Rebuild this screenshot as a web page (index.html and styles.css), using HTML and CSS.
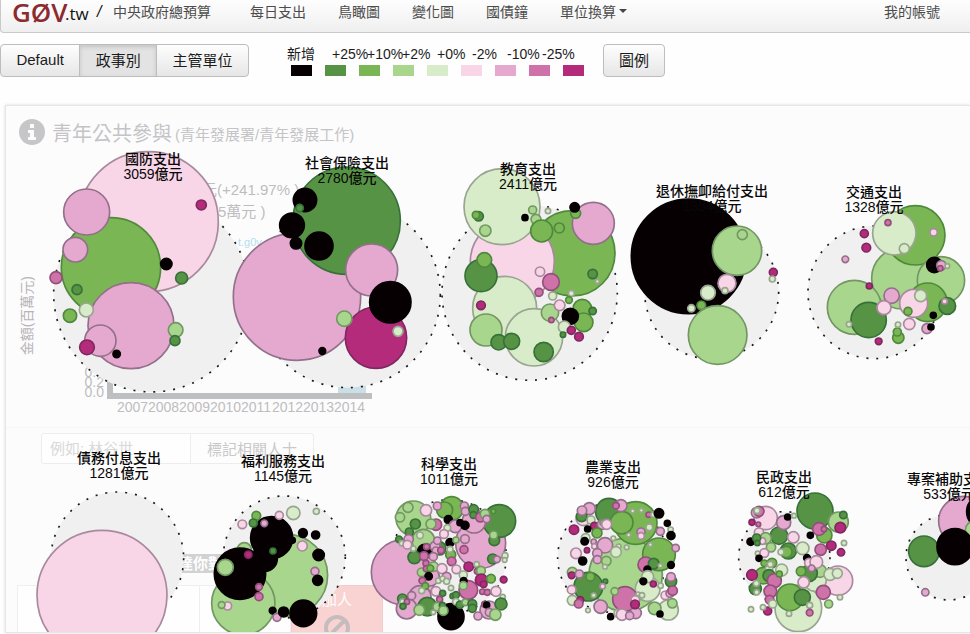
FILE: index.html
```
<!DOCTYPE html>
<html lang="zh-Hant">
<head>
<meta charset="utf-8">
<title>中央政府總預算</title>
<link rel="stylesheet" href="styles.css">
</head>
<body>
<header class="navbar">
  <a class="brand" href="#"><span class="brand-name">GØV</span><span class="brand-tld">.tw</span><span class="brand-slash">/</span></a>
  <nav class="nav">
    <a class="nav-main" href="#">中央政府總預算</a>
    <a href="#">每日支出</a>
    <a href="#">鳥瞰圖</a>
    <a href="#">變化圖</a>
    <a href="#">國債鐘</a>
    <a href="#">單位換算<span class="caret"></span></a>
  </nav>
  <a class="account" href="#">我的帳號</a>
</header>

<div class="toolbar">
  <div class="btn-group">
    <button class="btn" type="button">Default</button>
    <button class="btn active" type="button">政事別</button>
    <button class="btn" type="button">主管單位</button>
  </div>
  <div class="legend">
    <div class="legend-labels">
      <span>新增</span><span>+25%</span><span>+10%</span><span>+2%</span><span>+0%</span><span>-2%</span><span>-10%</span><span>-25%</span>
    </div>
    <div class="legend-swatches">
      <i class="k"></i><i class="d"></i><i class="g"></i><i class="l"></i><i class="p"></i><i class="f"></i><i class="q"></i><i class="m"></i><i class="v"></i>
    </div>
  </div>
  <button class="btn btn-single" type="button">圖例</button>
</div>

<main class="panel">
  <section class="detail">
    <h1 class="detail-title">
      <svg class="info" viewBox="0 0 26 26" aria-hidden="true"><circle cx="13" cy="13" r="13"/><path d="M11 5h4v4h-4zM9 11h6v7h2v3H9v-3h2v-4H9z"/></svg>
      <span>青年公共參與</span><small>(青年發展署/青年發展工作)</small>
    </h1>
    <div class="detail-figures">
      <p>元(+241.97% )</p>
      <p>5萬元 )</p>
      <a href="#">t.g0v</a>
    </div>
    <div class="history">
      <div class="axis-title">金額(百萬元)</div>
      <div class="ticks"><span>0.4</span><span>0.2</span><span>0.0</span></div>
      <div class="plot">
        <div class="bars"><i class="bar-first"></i><i class="bar-last"></i></div>
        <div class="years"><span>2007</span><span>2008</span><span>2009</span><span>2010</span><span>2011</span><span>2012</span><span>2013</span><span>2014</span></div>
      </div>
    </div>
    <form class="tagger">
      <input type="text" aria-label="相關人士" placeholder="例如: 林谷世">
      <button type="button">標記相關人士</button>
    </form>
    <div class="ask"><span>達你對</span></div>
    <div class="votes">
      <div class="vote"></div>
      <div class="vote narrow"></div>
      <div class="vote cut"><span>加人</span>
        <svg viewBox="0 0 28 28" aria-hidden="true"><circle cx="14" cy="14" r="11"/><path d="M7 21L21 7"/></svg>
      </div>
    </div>
  </section>
  <svg class="bubbles" role="img" aria-label="政事別支出"></svg>
</main>
<script src="bubbles.js"></script>
</body>
</html>
```
FILE: styles.css
```
* { box-sizing: border-box; }
body {
  margin: 0;
  height: 100vh;
  display: flex;
  flex-direction: column;
  overflow: hidden;
  background: #fefefe;
  color: #1c1c1c;
  font-family: "Liberation Sans", "Noto Sans CJK TC", sans-serif;
  font-size: 14px;
}
a { color: inherit; text-decoration: none; }
p, h1 { margin: 0; font-weight: normal; }

.navbar {
  display: flex;
  flex: none;
  height: 33px;
  padding: 0 30px 0 11px;
  border: 1px solid #c9c9c9;
  border-top: 0;
  border-right: 0;
  border-radius: 0 0 0 4px;
  background: linear-gradient(#fefefe, #efefef);
  color: #4c4c4c;
  line-height: 24px;
}
.brand { display: flex; width: 101px; color: #111; }
.brand-name { color: #8c2a30; font-size: 26px; line-height: 24px; font-family: "Open Sans", "Liberation Sans", sans-serif; width: 53px; font-weight: 600; }
.brand-tld { font-size: 17px; line-height: 27px; width: 32px; font-family: "Open Sans", sans-serif; font-weight: 500; }
.brand-slash { font-size: 16px; font-style: italic; }
.nav { display: flex; gap: 32px; }
.nav-main { margin-right: 7px; }
.caret {
  display: inline-block;
  margin-left: 3px;
  vertical-align: 4px;
  border: 4px solid transparent;
  border-top-color: #444;
  border-bottom: 0;
}
.account { margin-left: auto; }

.toolbar { display: flex; flex: none; align-items: center; height: 54px; }
.btn-group { display: flex; width: 249px; }
.btn {
  height: 33px;
  padding: 0 15px 2px;
  border: 1px solid #bdbdbd;
  background: linear-gradient(#fefefe, #e6e6e6);
  color: #1c1c1c;
  font: inherit;
  font-size: 15px;
  white-space: nowrap;
}
.btn-group .btn { flex-grow: 1; }
.btn-group .btn + .btn { margin-left: -1px; }
.btn-group .btn:first-child { border-radius: 4px 0 0 4px; }
.btn-group .btn:last-child { border-radius: 0 4px 4px 0; }
.btn.active { background: #e3e3e3; box-shadow: inset 0 2px 4px #c4c4c4; }
.btn-single { border-radius: 4px; }
.legend { width: 316px; margin-left: 38px; }
.legend-labels { display: grid; grid-template-columns: 45px repeat(7, 35px); line-height: 18px; white-space: nowrap; }
.legend-swatches { display: flex; gap: 13px; padding: 2px 0 0 4px; }
.legend-swatches i { width: 21px; height: 11px; }
.k { background: #060003; }
.d { background: #579345; }
.g { background: #7bb654; }
.l { background: #a8d68c; }
.p { background: #d9ecca; }
.f { background: #f8d6e8; }
.q { background: #e5a9d0; }
.m { background: #cf72aa; }
.v { background: #b52b7c; }

.panel {
  position: relative;
  flex: 1;
  min-height: 0;
  margin: 18px 0 1px 5px;
  border: 1px solid #e6e6e6;
  border-right: 0;
  box-shadow: 0 0 3px #dcdcdc;
  background: #fdfcfd;
  overflow: hidden;
}
.bubbles { position: absolute; inset: 0; width: 100%; height: 100%; }
.bubbles text { font-size: 14px; text-anchor: middle; fill: #080808; font-weight: 500; }

.detail { color: #bdbdbf; font-size: 15px; }
.detail-title { display: flex; align-items: center; gap: 7px; height: 30px; margin: 11px 0 0 13px; font-size: 20px; color: #c4c4c6; }
.detail-title small { font-size: 15px; margin: 3px 0 0 -4px; }
.info { width: 26px; height: 26px; fill: #c6c6c8; }
.info path { fill: #fdfcfd; }
.detail-figures { height: 128px; padding: 32px 0 0 196px; line-height: 22px; }
.detail-figures p + p { padding-left: 16px; }
.detail-figures a { display: block; padding-left: 36px; font-size: 11px; line-height: 38px; color: #b5dcf0; }
.history { display: flex; align-items: flex-end; width: 366px; height: 140px; }
.axis-title { writing-mode: vertical-rl; text-orientation: sideways; transform: rotate(180deg); white-space: nowrap; width: 30px; line-height: 30px; margin: 0 0 60px 6px; font-size: 14px; color: #b5b5b7; }
.ticks { display: flex; flex-direction: column; width: 65px; padding: 0 3px 18px 0; text-align: right; line-height: 10px; font-size: 14px; }
.plot { width: 265px; }
.bars { display: flex; justify-content: space-between; align-items: flex-end; height: 24px; padding-right: 6px; border-bottom: 6px solid #bebfc1; }
.bar-first { width: 6px; height: 14px; background: #bebfc1; }
.bar-last { width: 28px; height: 8px; background: #cbdfe9; }
.years { display: grid; grid-template-columns: repeat(8, 31px); padding-left: 10px; font-size: 14px; line-height: 16px; }
.tagger { display: flex; height: 59px; margin-top: 12px; padding: 5px 0 22px 35px; border-top: 1px solid #f6f5f6; }
.tagger input { width: 150px; padding: 0 8px; border: 1px solid #ededed; border-radius: 3px 0 0 3px; background: #fefefe; font: inherit; }
.tagger input::placeholder { color: #d9d9d9; opacity: 1; }
.tagger button { width: 123px; padding: 0; border: 1px solid #ededed; border-left: 0; border-radius: 0 3px 3px 0; background: #fdfdfd; color: #c9c9c9; font: inherit; }
.ask { display: flex; height: 93px; margin-top: 6px; padding: 62px 0 12px 172px; }
.ask span { width: 80px; background: #d2d2d2; color: #fefefe; font-weight: bold; line-height: 19px; }
.votes { display: flex; height: 60px; padding-left: 11px; }
.vote { width: 183px; border: 1px solid #f0eff0; background: #fefefe; }
.vote.narrow { width: 91px; border-left: 0; }
.vote.cut { width: 92px; border-color: #f2cccb; background: #f9d3d2; color: #fefefe; display: flex; flex-direction: column; align-items: center; line-height: 28px; }
.vote svg { width: 28px; flex: none; fill: none; stroke: #c6bcbd; stroke-width: 4; }
```
FILE: bubbles.js
```
// Fill and outline for each level of change.
const COLORS = {
  k: ['#060003', '#060003'], d: ['#579345', '#37713a'], g: ['#7bb654', '#4f8a3c'],
  l: ['#a8d68c', '#739764'], p: ['#d9ecca', '#98a58f'], f: ['#f8d6e8', '#a98a9d'],
  q: ['#e5a9d0', '#93708a'], m: ['#cf72aa', '#91507a'], v: ['#b52b7c', '#7f2860']
};

// Bubbles are "colour x y radius" in thirds of a pixel from the group's origin.
const GROUPS = [
  { at: [0, 100], name: '國防支出', sum: '3059億元', label: [153, 164], total: [455, 582, 294],
    items: 'f 445 365 210,g 333 502 149,q 260 336 69,q 226 449 37,m 168 533 18,d 231 569 15,g 210 647 20,q 393 677 129,p 259 630 21,q 301 722 47,v 261 742 22,k 350 762 11,v 604 315 15,k 499 492 17,d 545 534 18,l 527 690 22,d 525 722 15' },
  { at: [220, 140], name: '社會保險支出', sum: '2780億元', label: [347, 168], total: [383, 465, 278],
    items: 'q 231 470 191,d 380 242 161,k 255 180 35,d 239 204 11,k 216 256 37,k 228 310 17,k 297 318 42,q 455 390 78,v 468 593 92,k 511 487 62,p 534 574 15,l 373 536 23,k 307 633 10' },
  { at: [435, 150], name: '教育支出', sum: '2411億元', label: [528, 174], total: [284, 428, 263],
    items: 'g 412 310 128,f 232 335 126,p 201 170 114,q 475 220 63,p 209 475 96,p 297 562 86,d 131 199 14,g 123 195 11,k 270 203 9,l 293 180 12,l 303 208 15,g 320 243 33,g 373 234 15,p 339 183 8,g 422 190 15,k 419 172 14,l 151 242 17,d 138 377 48,g 148 330 22,f 315 365 14,m 348 396 25,m 312 427 12,d 473 372 14,p 487 394 6,p 353 438 12,p 409 430 9,g 402 450 10,l 345 488 26,f 374 466 16,m 349 510 8,g 442 476 28,g 446 517 28,k 406 499 24,d 473 483 11,p 388 531 18,v 409 541 12,d 384 554 8,v 432 560 13,v 138 466 13,l 153 540 48,d 191 577 23,d 230 574 24,d 326 606 29' },
  { at: [620, 170], name: '退休撫卹給付支出', sum: '1354億元', label: [712, 196], total: [275, 366, 201],
    items: 'k 206 259 172,l 351 242 74,l 367 194 15,f 321 340 27,p 315 362 9,p 264 368 22,g 244 406 13,p 214 415 11,l 293 495 88,v 460 307 12,p 457 327 9' },
  { at: [620, 170], name: '交通支出', sum: '1328億元', label: [874, 197], total: [763, 367, 199],
    items: 'l 847 325 92,g 886 196 89,p 823 190 65,l 963 331 71,l 703 412 81,g 923 397 58,d 746 450 53,f 881 400 42,m 804 158 9,p 853 236 15,f 941 187 11,k 943 285 23,q 964 286 14,m 961 295 8,p 982 288 7,v 733 191 12,v 739 233 13,q 676 268 10,v 748 348 9,q 815 377 23,f 792 413 21,p 902 377 18,g 864 424 12,d 982 408 25,f 974 394 8,k 940 436 9,f 868 462 17,q 921 476 15,k 933 471 9,g 835 503 17,g 832 486 12,p 834 464 8,p 687 463 8,v 776 514 10' },
  { at: [0, 420], name: '債務付息支出', sum: '1281億元', label: [119, 463], total: [352, 415, 199],
    items: 'f 306 526 195' },
  { at: [0, 420], name: '福利服務支出', sum: '1145億元', label: [283, 466], total: [853, 411, 183],
    items: 'l 860 466 123,l 730 550 95,k 815 353 63,k 877 361 9,k 794 416 38,l 733 389 21,k 720 461 77,l 676 442 24,v 745 404 11,g 769 287 13,d 760 309 12,f 727 313 13,q 793 310 10,f 838 286 12,p 880 279 20,p 949 274 9,k 909 339 13,k 947 345 12,f 907 378 15,d 819 393 9,k 956 405 17,q 945 454 12,k 953 481 15,m 777 501 10,m 777 530 12,f 683 558 12,l 665 555 10,k 818 572 10,q 831 592 12,k 851 576 15,k 910 580 40' },
  { at: [360, 450], name: '科學支出', sum: '1011億元', label: [449, 469], total: [268, 320, 171],
    items: 'q 132 367 98,l 160 205 52,q 362 280 75,d 418 213 49,g 275 175 35,g 254 180 24,q 342 214 35,l 190 272 34,q 180 440 33,q 140 476 31,q 387 480 27,k 273 500 39,m 325 420 28,d 202 470 28,q 210 380 28,k 194 304 21,l 144 172 15,l 120 202 14,f 198 181 17,q 232 168 12,q 313 168 12,q 316 184 12,d 341 178 14,d 340 195 10,m 361 202 14,l 375 192 14,q 380 207 11,g 400 184 7,k 265 209 12,q 286 229 19,k 300 218 9,k 315 226 12,m 228 224 17,l 213 222 15,d 166 222 15,d 148 246 12,p 262 234 10,f 252 252 13,d 117 268 10,p 126 280 8,q 146 268 14,f 142 284 13,p 180 256 10,d 238 295 20,q 225 289 15,q 232 272 11,m 200 290 9,q 228 302 11,m 243 301 10,k 270 278 12,l 288 270 9,q 315 267 13,m 312 299 12,d 403 271 16,l 401 255 12,g 272 314 15,p 270 298 9,m 275 334 13,d 163 322 19,p 160 296 8,m 192 318 13,q 220 320 12,m 198 340 9,v 326 350 14,d 398 327 15,q 411 328 10,p 435 317 9,p 434 330 7,p 350 343 8,m 352 364 9,l 363 362 13,l 185 367 13,m 199 356 9,l 221 350 14,g 211 355 10,f 246 356 15,k 206 379 11,f 289 358 13,q 260 380 13,p 235 392 8,p 248 386 8,p 260 394 9,m 187 392 10,g 196 408 10,p 310 375 12,k 311 393 10,l 310 407 12,v 364 390 18,v 371 403 10,g 393 386 13,v 431 389 10,p 273 414 8,p 185 422 9,q 155 437 12,f 228 424 14,d 248 430 9,m 367 425 8,m 382 427 9,f 408 424 15,p 428 441 8,d 278 438 8,d 288 435 10,p 288 455 10,d 300 464 11,l 316 457 10,d 337 462 13,d 337 475 12,m 239 448 9,l 232 470 13,d 247 466 9,l 250 482 14,l 178 480 16,d 127 446 14,p 128 456 9,m 141 455 8,d 129 469 9,m 374 463 9,k 380 465 9,q 388 487 12,d 423 462 18,l 406 494 17,q 354 498 12,p 220 487 7' },
  { at: [540, 450], name: '農業支出', sum: '926億元', label: [613, 472], total: [217, 323, 164],
    items: 'l 257 375 110,d 207 185 40,g 287 219 64,g 245 218 34,g 357 313 49,p 323 417 37,d 145 410 43,m 255 447 37,p 385 480 30,f 130 205 22,q 148 176 18,d 125 199 16,q 126 182 14,p 153 210 12,v 163 228 11,q 187 223 15,l 187 218 7,f 200 223 15,v 102 239 14,k 143 237 9,g 171 249 15,q 243 167 18,m 228 167 10,p 278 183 6,p 304 181 6,p 328 232 10,q 303 246 12,f 303 258 10,p 266 255 6,m 326 194 8,p 340 194 8,k 357 190 14,k 382 220 9,p 392 239 8,q 361 244 12,k 393 257 12,q 407 294 11,p 137 264 13,k 134 274 11,v 141 301 8,f 108 310 16,k 128 333 12,q 161 275 8,f 163 289 8,q 195 286 23,q 172 310 14,q 172 329 12,p 220 265 7,p 236 289 7,p 228 306 16,l 199 333 14,p 195 350 7,p 260 292 7,p 331 284 6,m 317 344 23,d 341 341 16,p 361 347 6,k 322 358 10,k 393 345 10,p 323 380 18,k 310 394 10,v 340 402 9,l 97 367 15,v 95 376 10,q 118 372 12,f 95 419 13,p 97 451 15,g 151 380 13,d 196 394 7,f 188 409 8,p 161 436 7,v 121 450 10,m 116 461 13,p 144 481 7,q 182 470 20,k 212 500 9,p 234 490 12,f 246 494 17,q 287 489 17,q 269 497 12,l 224 424 11,f 286 450 13,v 285 463 13,p 294 432 6,p 306 436 8,d 393 394 17,q 393 381 13,p 362 407 8,f 376 436 13,q 390 430 12,m 398 422 14,l 397 460 14,l 344 475 19,k 360 492 9' },
  { at: [720, 450], name: '民政支出', sum: '612億元', label: [784, 482], total: [193, 322, 137],
    items: 'd 285 183 54,f 137 204 35,p 235 475 70,f 354 392 44,l 355 216 30,d 177 257 26,p 285 390 34,l 300 363 19,g 210 442 40,d 267 370 25,q 110 188 16,m 117 184 15,p 111 182 9,v 96 217 9,m 115 223 7,q 191 218 21,k 203 201 9,p 222 197 7,d 370 195 11,v 361 233 16,g 313 256 23,m 297 237 19,m 312 237 8,k 271 256 9,f 220 262 17,f 117 248 14,l 137 265 17,f 127 273 10,k 92 275 11,d 110 264 12,d 112 279 8,l 153 292 14,d 205 303 24,g 199 306 17,p 183 306 9,p 248 295 19,m 302 299 17,v 334 287 14,v 363 307 11,p 372 279 8,p 113 310 7,f 133 309 13,k 117 325 9,g 156 339 14,g 133 340 10,k 261 324 10,f 267 338 13,f 289 336 19,q 275 355 10,p 185 360 18,g 130 377 25,p 147 357 11,p 151 343 9,d 147 377 18,m 163 392 21,g 178 372 9,v 96 375 16,g 243 364 14,d 106 416 18,p 109 400 9,p 110 427 8,m 151 424 19,m 149 449 13,v 143 483 12,p 158 462 12,p 129 472 8,p 93 478 8,f 251 397 17,p 330 373 18,p 352 370 15,m 310 427 21,d 247 442 24,p 269 466 9,m 269 488 10,p 207 491 8,l 326 462 12,p 360 442 8' },
  { at: [720, 450], name: '專案補助支出', sum: '533億元', label: [949, 484], total: [686, 322, 128],
    items: 'q 730 213 74,k 790 185 50,l 762 240 26,d 612 304 46,k 705 290 54,q 616 427 11' }
];

const NS = 'http://www.w3.org/2000/svg';
const root = document.querySelector('.bubbles');
// The labels and origins count from the window's corner, the drawing from the panel's.
const canvas = add(root, 'g', { transform: 'translate(-6,-106)' });

function add(parent, tag, attrs, text) {
  const el = document.createElementNS(NS, tag);
  for (const key in attrs) el.setAttribute(key, attrs[key]);
  if (text) el.textContent = text;
  parent.appendChild(el);
  return el;
}

const layers = GROUPS.map(g => add(canvas, 'g', { transform: `translate(${g.at}) scale(0.3333)`, 'stroke-width': 5 }));
GROUPS.forEach((g, i) => {
  const [cx, cy, r] = g.total;
  add(layers[i], 'circle', { cx, cy, r, fill: '#f1f0f1', stroke: '#1a1a1a', 'stroke-width': 5, 'stroke-dasharray': '6 24' });
});
GROUPS.forEach((g, i) => {
  for (const item of g.items.split(',')) {
    const [c, cx, cy, r] = item.split(' ');
    add(layers[i], 'circle', { cx, cy, r, fill: COLORS[c][0], stroke: COLORS[c][1] });
  }
  add(canvas, 'text', { x: g.label[0], y: g.label[1] }, g.name);
  add(canvas, 'text', { x: g.label[0], y: g.label[1] + 15 }, g.sum);
});
```
